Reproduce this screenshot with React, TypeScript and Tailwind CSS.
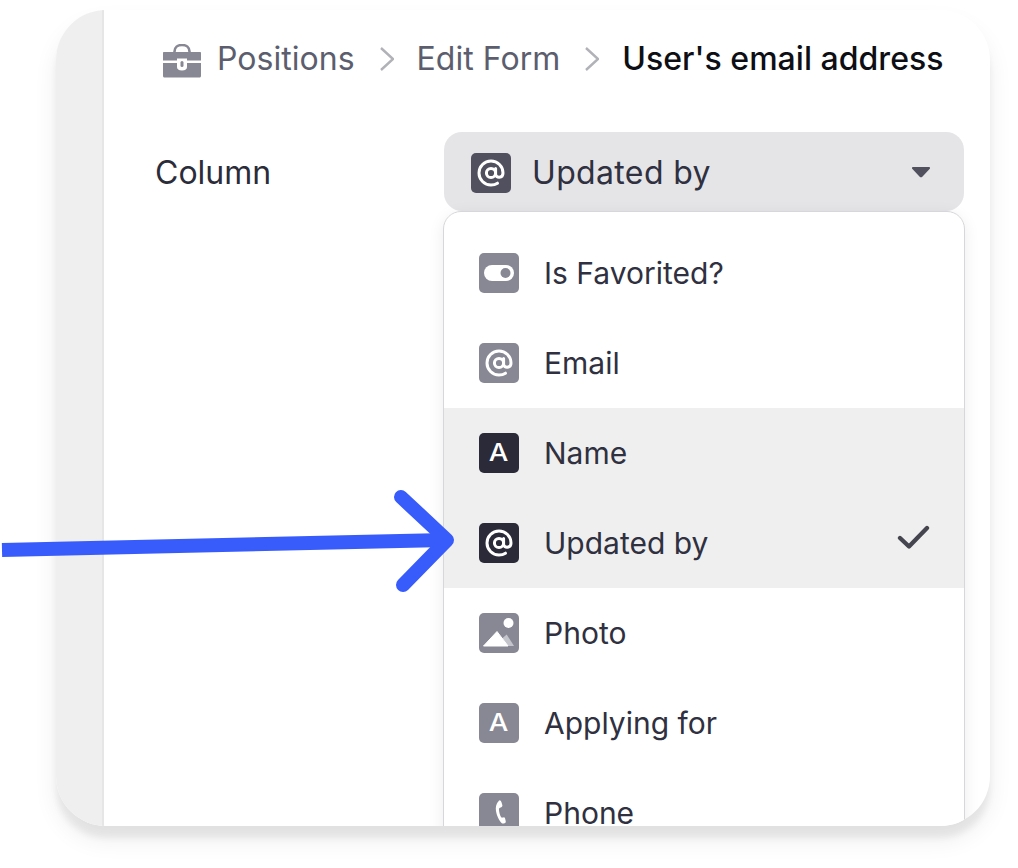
import React from 'react';

const AtIcon = () => (
  <svg viewBox="0 0 40 40" className="w-10 h-10" fill="none" stroke="white" strokeWidth="3" strokeLinecap="round">
    <circle cx="20" cy="20" r="4.600" />
    <path d="M24.600 15.500v5.500c0 4.500 7.400 4.500 7.400-1 0-6.600-5.400-12-12-12S8 13.400 8 20s5.400 12 12 12c2.500 0 4.500-.5 6.500-1.800" />
  </svg>
);

const ToggleIcon = () => (
  <svg viewBox="0 0 40 40" className="w-10 h-10">
    <rect x="5" y="12" width="30" height="16" rx="8" fill="white" />
    <circle cx="26.500" cy="20" r="5" fill="#878894" />
  </svg>
);

const PhotoIcon = () => (
  <svg viewBox="0 0 40 40" className="w-10 h-10">
    <circle cx="29.500" cy="10" r="5" fill="white" />
    <path d="M27.700 21.500 L35 33 H27 L23 25.500 Z" fill="#c4c5cc" />
    <path d="M18 18.500 L29 33 H4.500 Z" fill="white" stroke="white" strokeLinejoin="round" />
  </svg>
);

const PhoneIcon = () => (
  <svg viewBox="0 0 40 40" className="w-10 h-10">
    <path d="M19.500 7.500c1.500-.6 2.500.2 3 1.800l.8 2.700c.3 1-.1 1.800-1 2.200l-1.300.6c-.8.4-1.100 1.100-1 2.200.2 2.500.8 4.800 1.900 6.800.5.8 1 1 1.700.8l.9-.2c.8-.2 1.300.2 1.600 1l.6 2.500c.3 1.200-.2 2-1.200 2.400-1.500.6-2.700.4-3.700-1-2.800-3.500-5-9-5-14 0-3 1.500-6.500 3.700-7.800Z" fill="white" />
  </svg>
);

const LetterIcon = () => <span className="text-[24px] font-medium text-white leading-none scale-x-[1.15]">A</span>;

type Item = { label: string; icon: React.ReactNode; active?: boolean; checked?: boolean };

const items: Item[] = [
  { label: 'Is Favorited?', icon: <ToggleIcon /> },
  { label: 'Email', icon: <AtIcon /> },
  { label: 'Name', icon: <LetterIcon />, active: true },
  { label: 'Updated by', icon: <AtIcon />, active: true, checked: true },
  { label: 'Photo', icon: <PhotoIcon /> },
  { label: 'Applying for', icon: <LetterIcon /> },
  { label: 'Phone', icon: <PhoneIcon /> },
];

const Chevron = () => (
  <svg viewBox="0 0 16 26" className="w-4 h-[26px] mx-[23px]" fill="none" stroke="#b1b2b7" strokeWidth="2.400">
    <path d="M3 2 L15 13 L3 24" />
  </svg>
);

export default function App() {
  return (
    <div className="relative w-[1018px] h-[868px] bg-white overflow-hidden pl-[56px] pt-[10px] font-['Inter',sans-serif]">
      <div className="flex w-[934px] h-[816px] rounded-[50px] bg-white overflow-hidden shadow-[0_12px_6px_rgba(0,0,0,0.06),0_14px_24px_rgba(0,0,0,0.07)]">
        <div className="w-[48px] shrink-0 bg-[#efefef] border-r-2 border-[#e6e6e6]" />
        <div className="flex-1 pl-[51px] pr-[26px] min-w-0">
          <div className="flex items-center h-[40px] mt-[29px] ml-[7px] text-[32px] tracking-[0.03px] text-[#5c5e6e] whitespace-nowrap">
            <svg viewBox="0 0 40 34" className="w-10 h-[34px] mr-[15px] mt-[4px]">
              <path d="M12.500 9V7.500C12.500 3.500 15.500 1 20 1s7.500 2.500 7.500 6.500V9" fill="none" stroke="#878894" strokeWidth="2.600" />
              <path d="M2 8h36c.6 0 1 .4 1 1v7.500H25v-2h-10v2H1V9c0-.6.4-1 1-1Z" fill="#878894" />
              <path d="M1 19h14v4c0 2 1.500 3.500 5 3.500s5-1.500 5-3.500v-4h14v13c0 .8-.6 1.500-1.500 1.500h-35C1.600 33.500 1 32.800 1 32Z" fill="#878894" />
              <rect x="18.500" y="17" width="3" height="6" rx="1.500" fill="#878894" />
            </svg>
            <span>Positions</span>
            <Chevron />
            <span>Edit Form</span>
            <Chevron />
            <span className="font-medium text-[#0e0f14]">User's email address</span>
          </div>
          <div className="flex mt-[53px]">
            <div className="w-[289px] shrink-0 h-[79px] pt-[2px] flex items-center text-[32px] text-[#2b2c3a]">Column</div>
            <div className="flex-1 min-w-0">
              <div className="flex items-center h-[79px] rounded-[18px] bg-[#e5e5e8] pl-[27px] pr-[33px]">
                <div className="w-10 h-10 mt-[2px] rounded-[5px] bg-[#50505f] flex items-center justify-center">
                  <AtIcon />
                </div>
                <span className="ml-[21px] mt-[2px] text-[32px] tracking-[0.35px] text-[#2f3040]">Updated by</span>
                <svg viewBox="0 0 20 12" className="ml-auto w-5 h-3">
                  <path d="M2 1h16c1 0 1.400 1 .8 1.700l-7.500 8c-.7.7-1.900.7-2.600 0l-7.500-8C.6 2 1 1 2 1Z" fill="#50505f" />
                </svg>
              </div>
              <div className="h-[640px] bg-white rounded-t-[18px] border border-[#d7d7db] -mx-px pt-[16px] shadow-[0_4px_16px_rgba(0,0,0,0.08)]">
                {items.map((item) => (
                  <div
                    key={item.label}
                    className={item.active ? 'flex items-center h-[90px] pl-[35px] pr-[33px] bg-[#efefef]' : 'flex items-center h-[90px] pl-[35px] pr-[33px]'}
                  >
                    <div className={item.active ? 'w-10 h-10 rounded-[5px] bg-[#2a2a39] flex items-center justify-center overflow-hidden' : 'w-10 h-10 rounded-[5px] bg-[#878894] flex items-center justify-center overflow-hidden'}>
                      {item.icon}
                    </div>
                    <span className="ml-[25px] text-[30px] text-[#2f3040]">{item.label}</span>
                    {item.checked && (
                      <svg viewBox="0 0 34 28" className="ml-auto -mt-[12px] w-[34px] h-[28px]" fill="none" stroke="#44454f" strokeWidth="4.300" strokeLinecap="round" strokeLinejoin="round">
                        <path d="M3 15 L12 23.500 L30 5" />
                      </svg>
                    )}
                  </div>
                ))}
              </div>
            </div>
          </div>
        </div>
      </div>

      {/* blue arrow over the page */}
      <svg viewBox="0 0 1018 868" className="absolute inset-0 w-[1018px] h-[868px] pointer-events-none" fill="none" stroke="#385cfb" strokeWidth="14">
        <path d="M2 550 L445 540" />
        <path d="M401 497 L447 540 L403 585" strokeLinecap="round" strokeLinejoin="round" />
      </svg>
    </div>
  );
}
